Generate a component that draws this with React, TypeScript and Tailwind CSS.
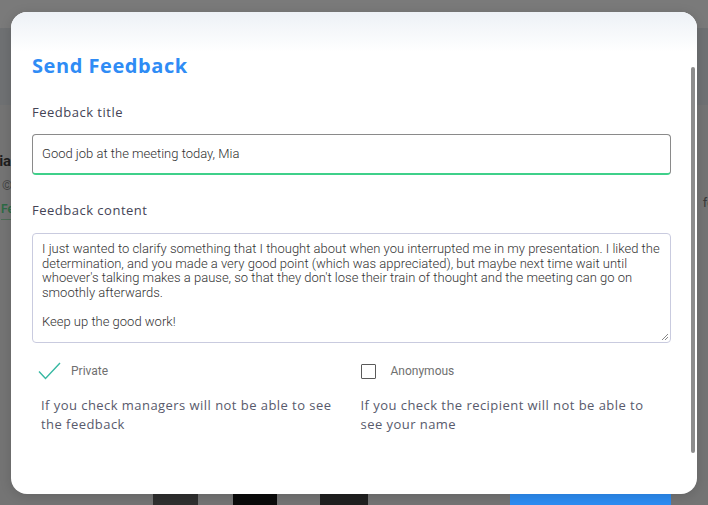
import React from "react";

const mont = { fontFamily: '"Open Sans", "Noto Sans", sans-serif' };
const rob = { fontFamily: 'Roboto, "Liberation Sans", sans-serif' };

export default function App() {
  const content =
    "I just wanted to clarify something that I thought about when you interrupted me in my presentation. I liked the determination, and you made a very good point (which was appreciated), but maybe next time wait until whoever's talking makes a pause, so that they don't lose their train of thought and the meeting can go on smoothly afterwards.\n\nKeep up the good work!";
  return (
    <div className="relative w-[708px] h-[505px] overflow-hidden bg-[#767676]">
      {/* background page under overlay */}
      <div className="flex flex-col h-full">
        <div className="h-[28px] bg-[#7a7a7a]" />
        <div className="h-[77px] bg-[#6f7173]" />
        <div className="flex-1 bg-[#747474] flex flex-col">
          <div className="flex justify-between pt-[46px]">
            <div className="flex flex-col ml-[-14px]">
              <span className="text-[15px] font-bold text-[#1e1e1e] leading-[20px]" style={rob}>Mia</span>
              <span className="ml-[16px] mt-[6px] text-[13px] text-[#444] leading-[18px]" style={rob}>©</span>
              <span className="ml-[15px] mt-[6px] text-[12px] font-semibold text-[#2d6b45] leading-[16px] border-b border-[#4f6b57] pb-[2px] w-[40px]" style={rob}>Fe</span>
            </div>
            <span className="mt-[42px] mr-[-6px] text-[13px] text-[#3a3a3a]" style={rob}>fc</span>
          </div>
          <div className="mt-auto flex items-end h-[20px]">
            <div className="ml-[153px] w-[45px] h-[20px] bg-[#2f2f2f] rounded-t-[6px]" />
            <div className="ml-[35px] w-[44px] h-[20px] bg-[#0b0b0b]" />
            <div className="ml-[43px] w-[48px] h-[20px] bg-[#202020]" />
            <div className="ml-[142px] w-[161px] h-[16px] bg-[#2c8cf2] rounded-t-[5px]" />
          </div>
        </div>
      </div>

      {/* modal */}
      <div className="absolute left-[11px] top-[12px] w-[686px] h-[482px] rounded-[16px] bg-white overflow-hidden shadow-[0_2px_12px_rgba(0,0,0,0.15)]">
        <div className="absolute left-0 top-0 w-full h-[40px] bg-gradient-to-b from-[#edf1f6] to-white" />
        <div className="absolute right-[2px] top-[55px] w-[4px] h-[386px] rounded-full bg-[#8d8d8d]" />
        <div className="relative pl-[21px] pr-[26px] pt-[40px]">
          <h2 className="text-[20px] leading-[28px] font-bold tracking-[0.55px] text-[#2f8cf5]" style={mont}>
            Send Feedback
          </h2>
          <div className="mt-[22px] text-[13px] leading-[20px] tracking-[0.5px] text-[#444456]" style={mont}>
            Feedback title
          </div>
          <div className="mt-[12px] h-[41px] rounded-[4px] border border-[#8a8a8a] border-b-2 border-b-[#3fd08a] flex items-center pl-[9px] text-[13px] font-light text-[#2f2f2f]" style={rob}>
            Good job at the meeting today, Mia
          </div>
          <div className="mt-[25px] text-[13px] leading-[20px] tracking-[0.5px] text-[#444456]" style={mont}>
            Feedback content
          </div>
          <div className="relative mt-[13px] h-[110px] rounded-[4px] border border-[#c9cbdf] pl-[9px] pr-[4px] pt-[8px] text-[13px] leading-[14.6px] font-light text-[#333] whitespace-pre-wrap" style={rob}>
            {content}
            <svg className="absolute right-[1px] bottom-[1px]" width="9" height="9" viewBox="0 0 9 9">
              <path d="M8 2L2 8M8 5L5 8" stroke="#888" strokeWidth="1" />
            </svg>
          </div>
          <div className="grid grid-cols-2 mt-[18px]">
            <div className="pl-[6px]">
              <div className="flex items-center h-[20px]">
                <svg width="24" height="18" viewBox="0 0 24 18">
                  <path d="M1 9.5L7.5 16.5L22 1" fill="none" stroke="#37b8a2" strokeWidth="1.4" />
                </svg>
                <span className="ml-[9px] text-[12px] text-[#707070]" style={rob}>Private</span>
              </div>
              <p className="mt-[15px] pl-[3px] w-[303px] text-[13px] leading-[19px] tracking-[0.45px] text-[#585a6c]" style={mont}>
                If you check managers will not be able to see the feedback
              </p>
            </div>
            <div className="pl-[9px]">
              <div className="flex items-center h-[20px]">
                <div className="w-[15px] h-[15px] border-[1.5px] border-[#5a5a5a] rounded-[1px]" />
                <span className="ml-[15px] text-[12px] text-[#707070]" style={rob}>Anonymous</span>
              </div>
              <p className="mt-[15px] w-[300px] text-[13px] leading-[19px] tracking-[0.45px] text-[#585a6c]" style={mont}>
                If you check the recipient will not be able to see your name
              </p>
            </div>
          </div>
        </div>
      </div>
    </div>
  );
}
